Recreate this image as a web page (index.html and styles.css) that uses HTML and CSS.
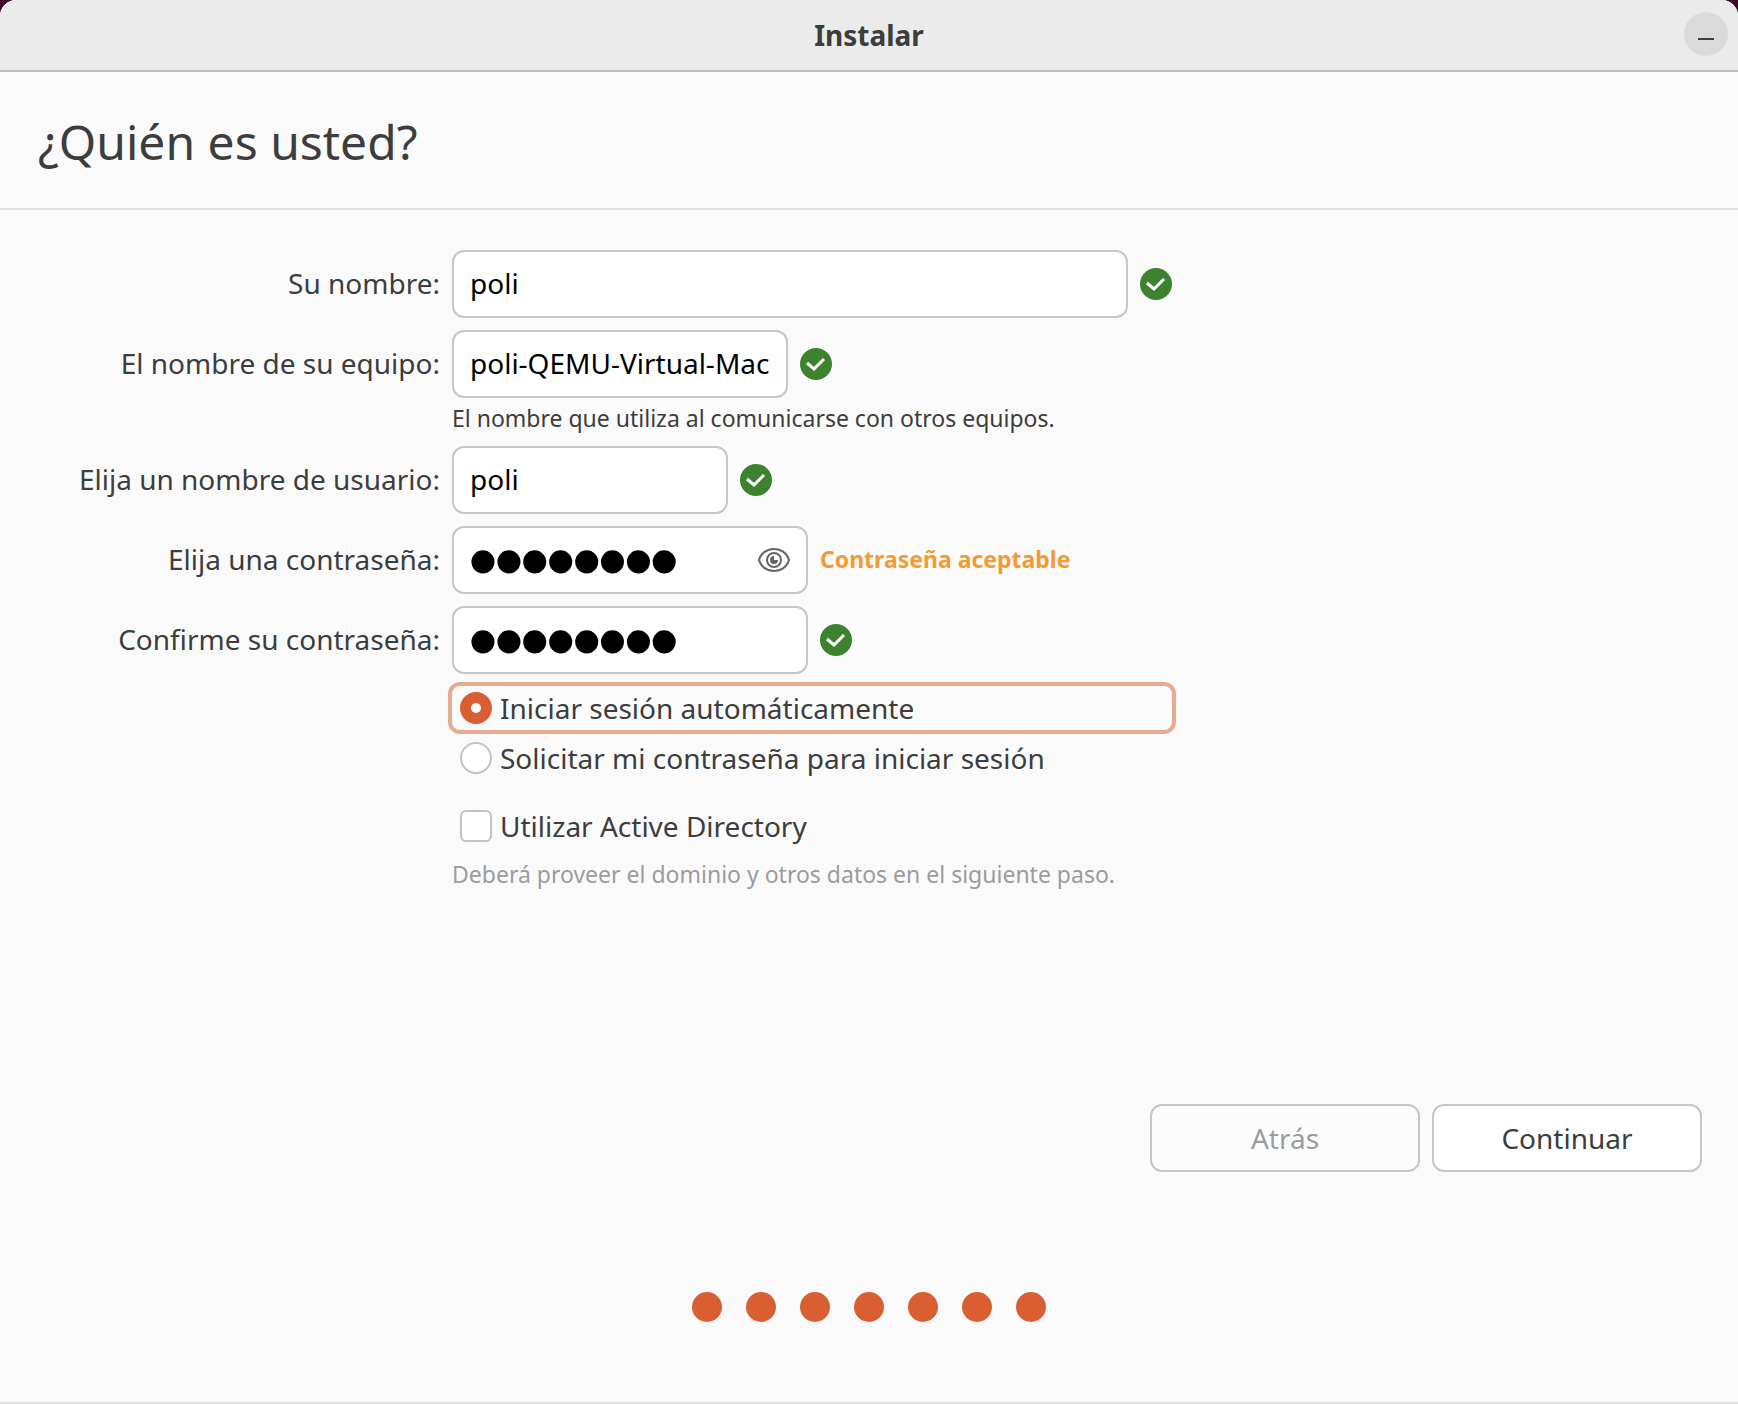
FILE: index.html
```html
<!DOCTYPE html>
<html lang="es">
<head>
<meta charset="utf-8">
<title>Instalar</title>
<link rel="stylesheet" href="styles.css">
</head>
<body>
<svg class="symbols" aria-hidden="true">
  <symbol id="ok" viewBox="0 0 32 32">
    <circle cx="16" cy="16" r="16" fill="#3c822f"/>
    <path d="M7 15l7 6 10-10" fill="none" stroke="#fff" stroke-width="3"/>
  </symbol>
</svg>
<div class="window">
  <header class="titlebar">
    <span class="titlebar-side"></span>
    <span class="title">Instalar</span>
    <span class="titlebar-side"><button class="minimize" type="button" aria-label="Minimizar"><span class="minimize-line"></span></button></span>
  </header>
  <h1 class="heading">¿Quién es usted?</h1>
  <form class="page">
    <div class="fields">
      <label class="label" for="name">Su nombre:</label>
      <div class="row">
        <div class="entry entry-name"><input class="input" id="name" type="text" value="poli"></div>
        <svg class="ok"><use href="#ok"/></svg>
      </div>

      <label class="label" for="host">El nombre de su equipo:</label>
      <div class="row">
        <div class="entry entry-host"><input class="input" id="host" type="text" value="poli-QEMU-Virtual-Machine"></div>
        <svg class="ok"><use href="#ok"/></svg>
      </div>
      <p class="hint">El nombre que utiliza al comunicarse con otros equipos.</p>

      <label class="label" for="user">Elija un nombre de usuario:</label>
      <div class="row">
        <div class="entry entry-user"><input class="input" id="user" type="text" value="poli"></div>
        <svg class="ok"><use href="#ok"/></svg>
      </div>

      <label class="label" for="password">Elija una contraseña:</label>
      <div class="row">
        <div class="entry entry-password">
          <input class="input input-secret" id="password" type="password" value="contrase">
          <button class="reveal" type="button" aria-label="Mostrar la contraseña">
            <svg class="eye" viewBox="0 0 32 24" fill="none" stroke="#666" stroke-width="2">
              <path d="M1 12C3 5 9 1 16 1s13 4 15 11c-2 7-8 11-15 11S3 19 1 12z"/>
              <circle cx="16" cy="12" r="7"/>
              <path d="M16 8a4 4 0 1 0 4 4h-4z" fill="#666" stroke="none"/>
            </svg>
          </button>
        </div>
        <span class="strength">Contraseña aceptable</span>
      </div>

      <label class="label" for="confirm">Confirme su contraseña:</label>
      <div class="row">
        <div class="entry entry-password"><input class="input input-secret" id="confirm" type="password" value="contrase"></div>
        <svg class="ok"><use href="#ok"/></svg>
      </div>
    </div>

    <div class="options">
      <label class="option option-focused"><input class="mark radio" type="radio" name="login" checked>Iniciar sesión automáticamente</label>
      <label class="option"><input class="mark radio" type="radio" name="login">Solicitar mi contraseña para iniciar sesión</label>
      <label class="option option-directory"><input class="mark checkbox" type="checkbox">Utilizar Active Directory</label>
      <p class="note">Deberá proveer el dominio y otros datos en el siguiente paso.</p>
    </div>

    <div class="actions">
      <button class="button" type="button" disabled>Atrás</button>
      <button class="button" type="submit">Continuar</button>
    </div>
  </form>
  <footer class="progress">
    <span class="dot"></span><span class="dot"></span><span class="dot"></span><span class="dot"></span><span class="dot"></span><span class="dot"></span><span class="dot"></span>
  </footer>
</div>
</body>
</html>
```
FILE: styles.css
```css
* {
  box-sizing: border-box;
}

body {
  margin: 0;
  background: #3a0c28;
  color: #3d3d3d;
  font-family: "Noto Sans", sans-serif;
  font-size: 28px;
  line-height: 36px;
}

.symbols {
  display: none;
}

.window {
  display: flex;
  flex-direction: column;
  min-height: 100vh;
  overflow: hidden;
  border-bottom: 2px solid #e0e0e0;
  border-radius: 16px 16px 0 0;
  background: #fafafa;
}

.titlebar {
  display: grid;
  grid-template-columns: 1fr auto 1fr;
  align-items: center;
  height: 72px;
  padding: 0 10px;
  border-bottom: 2px solid #bdbdbd;
  background: #ebebeb;
}

.titlebar-side {
  display: flex;
  justify-content: flex-end;
  padding-bottom: 2px;
}

.title {
  font-weight: 700;
}

.minimize {
  display: flex;
  align-items: center;
  justify-content: center;
  width: 44px;
  height: 44px;
  padding: 10px 0 0;
  border: 0;
  border-radius: 50%;
  background: #dadada;
}

.minimize-line {
  width: 16px;
  height: 2px;
  background: #3d3d3d;
}

.heading {
  margin: 0;
  padding: 38px 38px 34px;
  border-bottom: 2px solid #e0e0e0;
  font-size: 48px;
  font-weight: 400;
  line-height: 64px;
}

.page {
  display: flex;
  flex: 1;
  flex-direction: column;
  padding: 40px 36px 0;
}

.fields {
  display: grid;
  grid-template-columns: 404px 1fr;
  gap: 12px;
  align-items: center;
}

.label {
  padding-bottom: 2px;
  text-align: right;
}

.row {
  display: flex;
  align-items: center;
  gap: 12px;
}

.entry {
  display: flex;
  align-items: center;
  height: 68px;
  padding: 0 16px;
  border: 2px solid #c6c6c6;
  border-radius: 12px;
  background: #fff;
}

.entry-name {
  width: 676px;
}

.entry-host {
  width: 336px;
}

.entry-user {
  width: 276px;
}

.entry-password {
  width: 356px;
}

.input {
  flex: 1;
  min-width: 0;
  height: 64px;
  padding: 0 0 2px;
  border: 0;
  outline: 0;
  background: none;
  color: #000;
  font: inherit;
}

.input-secret {
  padding: 2px 0 0;
  font-family: "Liberation Sans", sans-serif;
  font-size: 74px;
  -webkit-text-stroke: 3px #000;
}

.ok {
  width: 32px;
  height: 32px;
}

.reveal {
  display: flex;
  padding: 0;
  border: 0;
  background: none;
}

.eye {
  width: 32px;
  height: 24px;
}

.hint {
  grid-column: 2;
}

.hint,
.note {
  margin: 0;
  font-size: 23px;
  line-height: 24px;
}

.hint {
  margin: -4px 0 4px;
}

.strength {
  padding-bottom: 2px;
  color: #f39a32;
  font-size: 23px;
  font-weight: 700;
}

.options {
  width: 728px;
  max-width: 100%;
  margin: 8px 0 0 412px;
}

.option {
  display: flex;
  align-items: center;
  gap: 8px;
  height: 48px;
  padding: 0 12px;
}

.option-focused {
  height: 52px;
  padding: 0 8px;
  border: 4px solid #e9aa92;
  border-radius: 12px;
}

.option-directory {
  margin-top: 20px;
}

.mark {
  flex: none;
  width: 32px;
  height: 32px;
  margin: 0;
  border: 2px solid #c2c2c2;
  background: #fff;
  appearance: none;
}

.radio {
  border-radius: 50%;
}

.radio:checked {
  border: 11px solid #d95f33;
}

.checkbox {
  border-radius: 6px;
}

.note {
  margin: 12px 0 0 4px;
  color: #9c9c9c;
}

.actions {
  display: flex;
  justify-content: flex-end;
  gap: 12px;
  margin-top: auto;
}

.button {
  width: 270px;
  height: 68px;
  border: 2px solid #c6c6c6;
  border-radius: 12px;
  background: #fff;
  color: #3d3d3d;
  font: inherit;
}

.button:disabled {
  background: #fcfcfc;
  color: #9c9c9c;
}

.progress {
  display: flex;
  justify-content: center;
  gap: 24px;
  padding: 120px 0 80px;
}

.dot {
  width: 30px;
  height: 30px;
  border-radius: 50%;
  background: #d95f33;
}
```
